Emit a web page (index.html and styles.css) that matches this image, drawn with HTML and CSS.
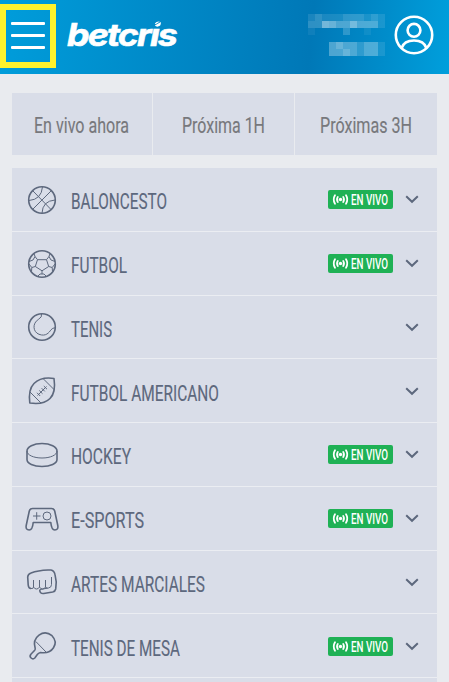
FILE: index.html
```html
<!DOCTYPE html>
<html lang="es">

<head>
    <meta charset="UTF-8">
    <meta name="viewport" content="width=device-width, initial-scale=1.0">
    <title>betcris</title>
    <link rel="stylesheet" href="styles.css">
</head>

<body>
    <!-- shared shapes -->
    <svg class="sprite" width="0" height="0">
        <symbol id="chevron" viewBox="0 0 14 9">
            <path d="M1.2 1.3 7 6.8l5.8-5.5" fill="none" stroke="currentColor" stroke-width="2" />
        </symbol>
        <symbol id="live" viewBox="0 0 65 19">
            <g fill="none" stroke="#fff" stroke-width="1.8" stroke-linecap="round">
                <path d="M7 5.3q-2.6 4.2 0 8.4M9.8 6.9q-1.6 2.6 0 5.2M15.2 6.9q1.6 2.6 0 5.2M18 5.3q2.6 4.2 0 8.4" />
            </g>
            <circle cx="12.5" cy="9.5" r="1.7" fill="#fff" />
            <text class="live-text" x="23" y="14.6" textLength="37" lengthAdjust="spacingAndGlyphs">EN VIVO</text>
        </symbol>
    </svg>

    <header class="header">
        <button class="menu" aria-label="Menu"><span></span><span></span><span></span></button>
        <svg class="logo" width="120" height="46" viewBox="0 0 120 46">
            <text class="logo-text" x="1" y="32.500" textLength="109" lengthAdjust="spacingAndGlyphs">betcr&#305;s</text>
            <path class="logo-dot" d="M88.800 10.500q1.700-2.400 5-2l-4.200 2.700zM88.800 12.600l6-3.600q.5 4-2.800 4.600-2 .2-3.200-1z" />
        </svg>
        <svg class="balance" width="77" height="56" viewBox="0 0 11 8" shape-rendering="crispEdges">
            <g fill="#fff">
                <path d="M0 1h1v1H0zM2 1h1v1H2zM3 1h2v1H3zM8 1h1v1H8zM10 1h1v1h-1zM10 2h1v1h-1zM10 5h1v2h-1z" opacity=".1" />
                <path d="M0 3h1v1H0zM8 3h1v1H8z" opacity=".06" />
                <path d="M1 1h1v1H1zM5 1h3v1H5zM9 1h1v1H9zM0 2h1v1H0zM1 2h1v1H1zM5 3h1v1H5zM7 5h1v2H7z" opacity=".18" />
                <path d="M3 2h3v1H3zM7 2h3v1H7zM3 5h4v1H3zM8 5h2v2H8zM3 6h4v1H3z" opacity=".3" />
                <path d="M2 2h1v1H2zM6 2h1v1H6z" opacity=".45" />
                <path d="M3 2h1v1H3zM4 5h1v1H4zM5 6h1v1H5z" opacity=".15" />
            </g>
        </svg>
        <svg class="user" width="40" height="40" viewBox="0 0 40 40" fill="none" stroke="#fff" stroke-width="2.6">
            <circle cx="20" cy="20" r="18.2" />
            <circle cx="20" cy="15.3" r="6.4" />
            <path d="M7.6 33q2.5-7.5 12.4-7.5T32.4 33" />
        </svg>
    </header>

    <nav class="tabs">
        <a class="tab"><svg width="98" height="36"><text x="1" y="26" textLength="95" lengthAdjust="spacingAndGlyphs">En vivo ahora</text></svg></a>
        <a class="tab"><svg width="86" height="36"><text x="1" y="26" textLength="83" lengthAdjust="spacingAndGlyphs">Próxima 1H</text></svg></a>
        <a class="tab"><svg width="95" height="36"><text x="1" y="26" textLength="92" lengthAdjust="spacingAndGlyphs">Próximas 3H</text></svg></a>
    </nav>

    <main class="sports">
        <div class="sport">
            <svg class="icon" viewBox="0 0 34 34">
                <circle cx="17" cy="17" r="13.3" />
                <path class="thin" d="M7.700 26.300 26.300 7.700M8 8 26 26.500M4 17.500q12.500-1 13.500-13.700M17 30.200Q17.500 18 30 17" />
            </svg>
            <svg class="name" width="200" height="36"><text x="1" y="26" textLength="96" lengthAdjust="spacingAndGlyphs">BALONCESTO</text></svg>
            <svg class="badge"><use href="#live" /></svg>
            <svg class="arrow"><use href="#chevron" /></svg>
        </div>
        <div class="sport">
            <svg class="icon" viewBox="0 0 34 34">
                <circle cx="17" cy="17" r="13.3" />
                <path class="thin" d="M12.500 12.700h9l2.200 6.800-6.700 4.300-6.700-4.300zM12.500 12.700 10 9.500M21.500 12.700l2.500-3.200M23.700 19.500l3.500 1M10.300 19.500l-3.500 1M17 23.800V27M9 6.500l1 3-2 3.500-4 1.500M25 6.500l-1 3 2 3.500 4 1.500M4 17l2.800 3.500-.3 4M30 17l-2.800 3.500.3 4M12.500 29.500 15 27h4l2.500 2.500" />
            </svg>
            <svg class="name" width="200" height="36"><text x="1" y="26" textLength="56" lengthAdjust="spacingAndGlyphs">FUTBOL</text></svg>
            <svg class="badge"><use href="#live" /></svg>
            <svg class="arrow"><use href="#chevron" /></svg>
        </div>
        <div class="sport">
            <svg class="icon" viewBox="0 0 34 34">
                <circle cx="17" cy="17" r="13.3" />
                <path class="thin" d="M16.500 4q1 3-3.200 5.500C7 13.500 8 22 14 24.300c7 2.600 10-1.800 12-4.500q1.600-2 4-2" />
            </svg>
            <svg class="name" width="200" height="36"><text x="1" y="26" textLength="41" lengthAdjust="spacingAndGlyphs">TENIS</text></svg>
            <svg class="arrow"><use href="#chevron" /></svg>
        </div>
        <div class="sport">
            <svg class="icon" viewBox="0 0 34 34">
                <path d="M29 4.500C21 3.300 14 4.500 9 9.500S3.800 21 4.800 29C13 30.200 20 29.500 25 24.500S30.200 12.500 29 4.500z" />
                <path class="thin" d="M18.500 5 29.500 16M5 18l11 11M12.500 21.500l9-9M12 18.800l3.200 3.200M14.300 16.500l3.200 3.200M16.600 14.200l3.200 3.200M18.800 12l3.200 3.200" />
            </svg>
            <svg class="name" width="200" height="36"><text x="1" y="26" textLength="148" lengthAdjust="spacingAndGlyphs">FUTBOL AMERICANO</text></svg>
            <svg class="arrow"><use href="#chevron" /></svg>
        </div>
        <div class="sport">
            <svg class="icon" viewBox="0 0 34 34">
                <path d="M2 13c0-4 6.500-7.500 15-7.500s15 3.500 15 7.500v8.500c0 4-6.500 7-15 7s-15-3-15-7z" />
                <path class="thin" d="M2 13c0 4 6.500 7 15 7s15-3 15-7" />
            </svg>
            <svg class="name" width="200" height="36"><text x="1" y="26" textLength="60" lengthAdjust="spacingAndGlyphs">HOCKEY</text></svg>
            <svg class="badge"><use href="#live" /></svg>
            <svg class="arrow"><use href="#chevron" /></svg>
        </div>
        <div class="sport">
            <svg class="icon" viewBox="0 0 34 34">
                <path d="M7.500 6.500h19q2.500 0 3.200 2.500L32.800 23.500q.7 4.500-3 4.500-3.300 0-4-7.500H8.200Q7.500 28 4.200 28q-3.700 0-3-4.500L4.300 9q.7-2.500 3.200-2.500z" />
                <path class="thin" d="M8 14h7.500M11.700 10.200v7.500" />
                <circle class="thin" cx="22" cy="14" r="4" />
            </svg>
            <svg class="name" width="200" height="36"><text x="1" y="26" textLength="73" lengthAdjust="spacingAndGlyphs">E-SPORTS</text></svg>
            <svg class="badge"><use href="#live" /></svg>
            <svg class="arrow"><use href="#chevron" /></svg>
        </div>
        <div class="sport">
            <svg class="icon" viewBox="0 0 34 34">
                <path d="M6 23.500Q3.500 23.500 3.200 20L2.700 12Q3 9 6 8q7-2.700 17-3h3q3 .5 4 4.500 2 7 .7 14.500-.5 2.500-3 3l-9 1.500q-4 .5-4-4" />
                <path class="thin" d="M8.500 15v7q0 2-2.500 1.500M8.500 22q1 2 3 2t3-2v-7M14.500 22q1 2 3 2t3-2v-7M15 24.500l8.500-1.500q3-.5 3-3.500v-7.500M20.500 22.500l2 .5" />
            </svg>
            <svg class="name" width="200" height="36"><text x="1" y="26" textLength="134" lengthAdjust="spacingAndGlyphs">ARTES MARCIALES</text></svg>
            <svg class="arrow"><use href="#chevron" /></svg>
        </div>
        <div class="sport">
            <svg class="icon" viewBox="0 0 34 34">
                <path d="M10.200 19.500Q7.500 11 14 6.200T27 6.700q5.500 5.800 1.500 12T15.500 23.500q-1.500.2-3 1.800l-2.700 3.700q-1.800 1.700-3.700 0t-.2-3.800L9 22q1.500-1 1.200-2.500z" />
                <path class="thin" d="M10.800 12.500 21.500 23.500" />
            </svg>
            <svg class="name" width="200" height="36"><text x="1" y="26" textLength="109" lengthAdjust="spacingAndGlyphs">TENIS DE MESA</text></svg>
            <svg class="badge"><use href="#live" /></svg>
            <svg class="arrow"><use href="#chevron" /></svg>
        </div>
    </main>
</body>

</html>
```
FILE: styles.css
```css
* {
    box-sizing: border-box;
}
body {
    display: flex;
    flex-direction: column;
    margin: 0;
    height: 100vh;
    overflow: hidden;
    background-color: #e9ebef;
    font-family: Roboto, "Open Sans", sans-serif;
}
svg {
    display: block;
    flex: none;
}
.sprite {
    position: absolute;
}
.header {
    display: flex;
    flex: none;
    align-items: flex-start;
    height: 74px;
    background: linear-gradient(95deg, #009ddb 0%, #0078b7 69%, #009fdc 100%);
}
.menu {
    display: flex;
    flex-direction: column;
    gap: 9px;
    width: 56px;
    height: 64px;
    margin: 4px 0 0;
    padding: 12px 5px 0 5px;
    background: none;
    border: 6px solid #fff22d;
}
.menu span {
    flex: none;
    width: 34px;
    height: 3px;
    background-color: #fff;
    border-radius: 1px;
}
.logo {
    margin: 13px 0 0 10px;
}
.logo-text {
    font-family: Inter, sans-serif;
    font-size: 31px;
    font-style: italic;
    font-weight: 700;
    letter-spacing: -1.6px;
    fill: #fff;
    stroke: #fff;
    stroke-width: 0.6;
}
.logo-dot {
    fill: #fff;
}
.balance {
    margin: 7px 0 0 122px;
}
.user {
    margin: 15px 0 0 9px;
}
.tabs {
    display: grid;
    flex: none;
    grid-template-columns: 140px 141px 142px;
    gap: 1px;
    height: 62px;
    margin: 19px 12px 13px;
}
.tab {
    display: flex;
    align-items: center;
    justify-content: center;
    padding-top: 1px;
    background-color: #d9dde8;
    font-size: 22px;
    fill: #77787c;
    stroke: #77787c;
    stroke-width: 0.15;
}
.sports {
    flex: 1;
    margin: 0 12px;
    background-color: #d9dde8;
}
.sport {
    display: flex;
    align-items: center;
    height: 63.75px;
    padding: 1px 18px 0 12px;
    border-bottom: 1px solid #ebedf2;
    color: #5d687d;
}
.icon {
    width: 34px;
    height: 34px;
    margin-left: 0.5px;
    fill: none;
    stroke: currentColor;
    stroke-width: 1.6;
    stroke-linejoin: round;
}
.icon .thin {
    stroke-width: 1;
}
.name {
    margin: 3px auto 0 11.5px;
    font-size: 22.5px;
    fill: currentColor;
    stroke: currentColor;
    stroke-width: 0.15;
}
.badge {
    width: 65px;
    height: 19px;
    margin-right: 12px;
    background-color: #1fb155;
    border-radius: 2px;
}
.live-text {
    font-size: 14px;
    font-weight: 500;
    fill: #fff;
}
.arrow {
    width: 14px;
    height: 9px;
}
```
